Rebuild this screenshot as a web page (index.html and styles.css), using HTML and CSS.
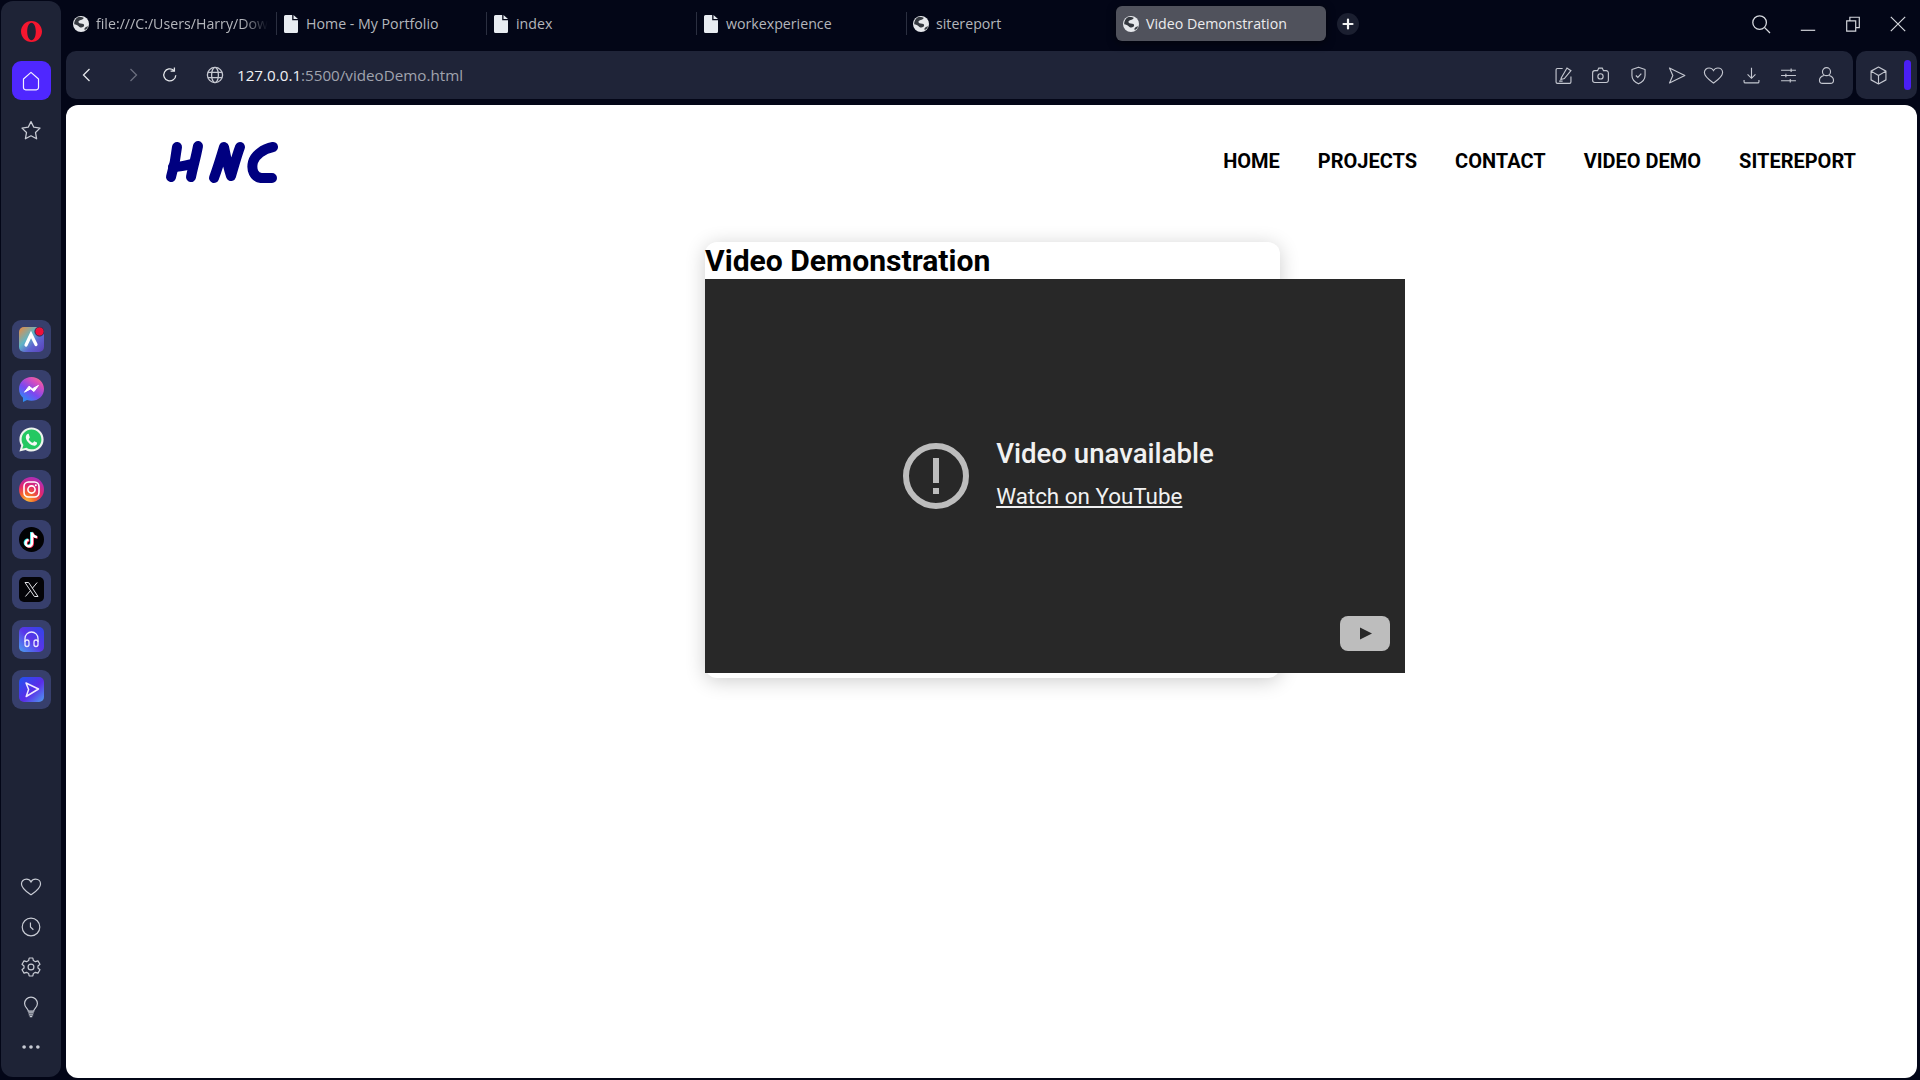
FILE: index.html
```html
<!DOCTYPE html>
<html lang="en">
<head>
<meta charset="utf-8">
<title>Video Demonstration</title>
<link rel="stylesheet" href="styles.css">
</head>
<body>
<svg class="defs" width="0" height="0" aria-hidden="true">
  <defs>
    <symbol id="i-globe" viewBox="0 0 16 16">
      <circle cx="8" cy="8" r="8" fill="#e6e8ec"/>
      <path d="M4.8 1.2C7 .6 9.6 1 10.6 1.8 10.6 3.2 9 3.6 7.6 4 6 4.5 5 5.4 5.6 6.4 6.4 7.6 9 7.2 10.4 8 11.6 8.8 11.2 10.4 10 11 8.6 11.8 6.6 11.4 5.6 10.2 4.6 9 3 8.6 1.2 8.2 1 5.4 2.4 2.6 4.8 1.2ZM11.6 13.4C11 12.6 12 11.8 13 11 13.8 10.4 14.6 10.2 15.2 10.2 14.6 12 13.2 13.6 11.6 14.2Z" fill="#34383f"/>
    </symbol>
    <symbol id="i-file" viewBox="0 0 14 18">
      <path d="M1.5 0H8.2V5.2H14V16.5A1.5 1.5 0 0 1 12.5 18H1.5A1.5 1.5 0 0 1 0 16.5V1.5A1.5 1.5 0 0 1 1.5 0ZM9.5 0 14 4H9.5Z" fill="#e8ecf1"/>
    </symbol>
    <symbol id="i-heart" viewBox="0 0 24 24">
      <path d="M12 20.5C8 17.6 1.6 13.6 1.6 8.6 1.6 5.6 4 3.4 7 3.4 9 3.4 11 4.5 12 6.4 13 4.5 15 3.4 17 3.4 20 3.4 22.4 5.6 22.4 8.6 22.4 13.6 16 17.6 12 20.5Z"/>
    </symbol>
  </defs>
</svg>

<aside class="sidebar">
  <svg class="opera" viewBox="0 0 21 21" aria-hidden="true"><path fill-rule="evenodd" d="M10.5 0C16.3 0 21 4.7 21 10.5S16.3 21 10.5 21 0 16.3 0 10.5 4.7 0 10.5 0ZM10.5 1.8C8 1.8 6.2 5.6 6.2 10.5S8 19.2 10.5 19.2 14.8 15.4 14.8 10.5 13 1.8 10.5 1.8Z" fill="#f5162f"/></svg>
  <div class="home-tile">
    <svg class="side-icon" viewBox="0 0 24 24"><path d="M12 2.6 3.8 9.8V19.2A2.4 2.4 0 0 0 6.2 21.6H17.8A2.4 2.4 0 0 0 20.2 19.2V9.8Z" stroke-linejoin="round"/></svg>
  </div>
  <svg class="side-icon star" viewBox="0 0 24 24"><path d="M12 2.6 14.8 8.2 21 9.1 16.5 13.5 17.6 19.8 12 16.8 6.4 19.8 7.5 13.5 3 9.1 9.2 8.2Z" stroke-linejoin="round"/></svg>

  <div class="apps">
    <div class="app-tile">
      <svg class="app" viewBox="0 0 25 25">
        <defs><linearGradient id="g-aria" x1="0" y1="0" x2="1" y2="1"><stop offset="0" stop-color="#f0883c"/><stop offset=".4" stop-color="#5fb5c6"/><stop offset=".65" stop-color="#5e63d0"/><stop offset="1" stop-color="#5a3fb8"/></linearGradient></defs>
        <rect width="25" height="25" rx="5" fill="url(#g-aria)"/>
        <path d="M7 18 12 7.5 17 17.5" fill="none" stroke="#fff" stroke-width="3.2" stroke-linecap="round"/>
        <circle cx="20.5" cy="4.5" r="4.6" fill="#f0103a" stroke="#2b2d50" stroke-width="1"/>
      </svg>
    </div>
    <div class="app-tile">
      <svg class="app" viewBox="0 0 25 25">
        <defs><linearGradient id="g-msg" x1=".1" y1="1" x2=".8" y2="0"><stop offset="0" stop-color="#1b9cf5"/><stop offset=".45" stop-color="#7a48f0"/><stop offset=".8" stop-color="#d94dbd"/><stop offset="1" stop-color="#f0708a"/></linearGradient></defs>
        <path d="M12.5 0C5.6 0 0 5.2 0 12 0 15.6 1.5 18.7 4 20.8V25L8 22.9C9.4 23.4 10.9 23.7 12.5 23.7 19.4 23.7 25 18.6 25 11.9S19.4 0 12.5 0Z" fill="url(#g-msg)"/>
        <path d="M5.5 15.2 10 9.2 13.4 11.8 19.5 8.4 15 14.5 11.6 11.9Z" fill="#fff" stroke="#fff" stroke-linejoin="round"/>
      </svg>
    </div>
    <div class="app-tile">
      <svg class="app" viewBox="0 0 25 25">
        <path d="M.4 24.6 2.2 18.4C1 16.5.4 14.4.4 12.4.4 5.7 5.8.4 12.5.4S24.6 5.7 24.6 12.4 19.2 24.4 12.5 24.4C10.4 24.4 8.4 23.9 6.7 22.9Z" fill="#eef3ee"/>
        <path d="M3.3 21.8 4.4 18C3.3 16.3 2.6 14.4 2.6 12.4 2.6 6.9 7 2.5 12.5 2.5S22.4 6.9 22.4 12.4 18 22.3 12.5 22.3C10.7 22.3 9 21.8 7.4 20.8Z" fill="#24c862"/>
        <path d="M9.3 6.8C8.8 6.8 8.2 7 7.8 7.5 7.3 8.1 6.8 9 6.8 10.3 6.8 12.3 8.2 14.2 8.5 14.6 9.8 16.4 11.7 18 14.2 18.6 16 19 17.4 18 17.9 16.9 18.1 16.3 18.1 15.7 18 15.6L15.7 14.4C15.4 14.3 15.1 14.4 15 14.6L14.2 15.6C14 15.8 13.8 15.8 13.5 15.7 11.7 15 10.4 13.6 9.8 12.4 9.6 12.1 9.8 11.9 10 11.7L10.7 10.7C10.8 10.5 10.8 10.3 10.7 10L9.8 7.2C9.7 6.9 9.5 6.8 9.3 6.8Z" fill="#f5f8f5"/>
      </svg>
    </div>
    <div class="app-tile">
      <svg class="app" viewBox="0 0 25 25">
        <defs><radialGradient id="g-ig" cx=".3" cy="1" r="1.1"><stop offset="0" stop-color="#fdc13a"/><stop offset=".3" stop-color="#f56a2b"/><stop offset=".6" stop-color="#e0276e"/><stop offset="1" stop-color="#a52fc8"/></radialGradient></defs>
        <circle cx="12.5" cy="12.5" r="12.5" fill="url(#g-ig)"/>
        <rect x="5" y="5" width="15" height="15" rx="4.5" fill="none" stroke="#fff" stroke-width="1.6"/>
        <circle cx="12.5" cy="12.5" r="3.6" fill="none" stroke="#fff" stroke-width="1.6"/>
        <circle cx="16.8" cy="8.2" r="1" fill="#fff"/>
      </svg>
    </div>
    <div class="app-tile">
      <svg class="app" viewBox="0 0 25 25">
        <circle cx="12.5" cy="12.5" r="12.5" fill="#020204"/>
        <g fill="none" stroke-width="2.4">
          <path d="M12.2 5V15.6A3.2 3.2 0 1 1 8.8 12.4M12.2 5C12.6 7.6 14.2 9.2 17.2 9.6" stroke="#25e4e8"/>
          <path d="M13.8 6V16.6A3.2 3.2 0 1 1 10.4 13.4M13.8 6C14.2 8.6 15.8 10.2 18.8 10.6" stroke="#fb2c55"/>
          <path d="M13 5.5V16.1A3.2 3.2 0 1 1 9.6 12.9M13 5.5C13.4 8.1 15 9.7 18 10.1" stroke="#fff"/>
        </g>
      </svg>
    </div>
    <div class="app-tile">
      <svg class="app" viewBox="0 0 25 25">
        <rect width="25" height="25" rx="5" fill="#040408"/>
        <path d="M6 5.5H9.6L19 19.5H15.4ZM18.2 5.5 13.4 11.2M11.5 13.6 6.4 19.5" fill="none" stroke="#e4e4e8" stroke-width="1"/>
      </svg>
    </div>
    <div class="app-tile">
      <svg class="app" viewBox="0 0 25 25">
        <defs><linearGradient id="g-mus" x1="0" y1="1" x2="1" y2="0"><stop offset="0" stop-color="#4aa2f2"/><stop offset=".5" stop-color="#5a35e8"/><stop offset="1" stop-color="#2f46e8"/></linearGradient></defs>
        <rect width="25" height="25" rx="5" fill="url(#g-mus)"/>
        <path d="M6 15V11.5A6.5 6.5 0 0 1 19 11.5V15" fill="none" stroke="#eceaff" stroke-width="1.3"/>
        <rect x="6" y="13" width="4" height="6.5" rx="2" fill="none" stroke="#eceaff" stroke-width="1.3"/>
        <rect x="15" y="13" width="4" height="6.5" rx="2" fill="none" stroke="#eceaff" stroke-width="1.3"/>
      </svg>
    </div>
    <div class="app-tile">
      <svg class="app" viewBox="0 0 25 25">
        <defs><linearGradient id="g-play" x1="0" y1="0" x2="1" y2="1"><stop offset="0" stop-color="#1f55f0"/><stop offset=".55" stop-color="#5a2ce8"/><stop offset="1" stop-color="#4f9ef0"/></linearGradient></defs>
        <rect width="25" height="25" rx="5" fill="url(#g-play)"/>
        <path d="M7 6 19.5 12 7.2 19.5 9.6 12.6Z" fill="none" stroke="#f0eaff" stroke-width="1.5" stroke-linejoin="round"/>
      </svg>
    </div>
  </div>

  <div class="side-bottom">
    <svg class="side-icon"><use href="#i-heart"/></svg>
    <svg class="side-icon" viewBox="0 0 24 24"><circle cx="12" cy="12" r="9.6"/><path d="M11.4 7V12L14.6 15"/></svg>
    <svg class="side-icon" viewBox="0 0 24 24"><circle cx="12" cy="12" r="3.2"/><path d="M10 2.2H14L14.6 5 16.8 6.2 19.6 5.3 21.8 9 19.6 10.9V13.1L21.8 15 19.6 18.7 16.8 17.8 14.6 19 14 21.8H10L9.4 19 7.2 17.8 4.4 18.7 2.2 15 4.4 13.1V10.9L2.2 9 4.4 5.3 7.2 6.2 9.4 5Z" stroke-linejoin="round"/></svg>
    <svg class="side-icon" viewBox="0 0 24 24"><path d="M9 16.4C9 14 5 12.6 5 8.2A7 7 0 0 1 19 8.2C19 12.6 15 14 15 16.4ZM9 18.5H15M9.6 20.5H14.4M10.6 22.4H13.4"/></svg>
    <svg class="side-icon dots" viewBox="0 0 24 24"><circle cx="4.5" cy="12" r="2"/><circle cx="12" cy="12" r="2"/><circle cx="19.5" cy="12" r="2"/></svg>
  </div>
</aside>

<div class="main">
  <div class="tabstrip">
    <div class="tab"><svg class="fav"><use href="#i-globe"/></svg><span class="tab-label fade">file:///C:/Users/Harry/Dow</span></div>
    <div class="tab sep"><svg class="fav-file"><use href="#i-file"/></svg><span class="tab-label">Home - My Portfolio</span></div>
    <div class="tab sep"><svg class="fav-file"><use href="#i-file"/></svg><span class="tab-label">index</span></div>
    <div class="tab sep"><svg class="fav-file"><use href="#i-file"/></svg><span class="tab-label">workexperience</span></div>
    <div class="tab sep"><svg class="fav"><use href="#i-globe"/></svg><span class="tab-label">sitereport</span></div>
    <div class="tab active"><svg class="fav"><use href="#i-globe"/></svg><span class="tab-label">Video Demonstration</span></div>
    <div class="newtab"><svg viewBox="0 0 12 12" width="12" height="12"><path d="M6 1.5V10.5M1.5 6H10.5" stroke="#f2f2f2" stroke-width="2.2" stroke-linecap="round"/></svg></div>
    <div class="winctl">
      <span><svg class="win search" viewBox="0 0 20 20"><circle cx="8.6" cy="8.6" r="6.8"/><path d="M13.4 13.4 19 19"/></svg></span>
      <span><svg class="win" viewBox="0 0 20 20"><path d="M2 17H18"/></svg></span>
      <span><svg class="win" viewBox="0 0 20 20"><path d="M3 6.5H13V18H3ZM6.5 6.5V2.5H17V14H13"/></svg></span>
      <span><svg class="win" viewBox="0 0 20 20"><path d="M2 2 18 18M18 2 2 18"/></svg></span>
    </div>
  </div>

  <div class="toolbar">
    <div class="addressbar">
      <svg class="tb back" viewBox="0 0 20 20"><path d="M12.5 4 6.5 10 12.5 16"/></svg>
      <svg class="tb forward" viewBox="0 0 20 20"><path d="M7.5 4 13.5 10 7.5 16"/></svg>
      <svg class="tb reload" viewBox="0 0 20 20"><path d="M15.8 10.2A6 6 0 1 1 13.8 5.4M14.4 2.4V6.2H10.6"/></svg>
      <svg class="tb globe" viewBox="0 0 20 20"><circle cx="10" cy="10" r="7.6"/><ellipse cx="10" cy="10" rx="3.4" ry="7.6"/><path d="M3 7.4H17M3 12.6H17"/></svg>
      <span class="url"><span class="url-host">127.0.0.1</span>:5500/videoDemo.html</span>
      <div class="tb-right">
        <svg class="tb" viewBox="0 0 24 24"><path d="M11 4H5A1.5 1.5 0 0 0 3.5 5.5V19.5A1.5 1.5 0 0 0 5 21H19A1.5 1.5 0 0 0 20.5 19.5V13M9.5 14.5 16 3.5 20.5 6.5 13 15.5 9 16.5ZM7 18.5H11"/></svg>
        <svg class="tb" viewBox="0 0 24 24"><path d="M8.6 6.5 10 3.5H14L15.4 6.5H18.5A2.5 2.5 0 0 1 21 9V17.5A2.5 2.5 0 0 1 18.5 20H5.5A2.5 2.5 0 0 1 3 17.5V9A2.5 2.5 0 0 1 5.5 6.5Z"/><circle cx="12" cy="13" r="3"/></svg>
        <svg class="tb" viewBox="0 0 24 24"><path d="M12 2.5 19.5 5.2V12C19.5 16.4 15.8 19.8 12 21.5 8.2 19.8 4.5 16.4 4.5 12V5.2Z" stroke-linejoin="round"/><path d="M9 12 11.2 14.2 15.2 9.8"/></svg>
        <svg class="tb" viewBox="0 0 24 24"><path d="M4 3.5 21.5 12 4 20.5 7.8 12Z" stroke-linejoin="round"/></svg>
        <svg class="tb"><use href="#i-heart"/></svg>
        <svg class="tb" viewBox="0 0 24 24"><path d="M12 3V15M7.5 10.8 12 15.2 16.5 10.8M3.5 17V19A1.5 1.5 0 0 0 5 20.5H19A1.5 1.5 0 0 0 20.5 19V17"/></svg>
        <svg class="tb" viewBox="0 0 24 24"><path d="M3.5 6H20.5M3.5 12H20.5M3.5 18H20.5M15 4V8M9 10V14M14 16V20"/></svg>
        <svg class="tb" viewBox="0 0 24 24"><circle cx="12" cy="7.6" r="4.6"/><path d="M9 12C5.6 13 4 15 4 17.4 4 19.6 5.6 21 7.5 21H16.5C18.4 21 20 19.6 20 17.4 20 15 18.4 13 15 12"/></svg>
      </div>
    </div>
    <div class="extbox">
      <svg class="tb" viewBox="0 0 24 24"><path d="M12 2.4 20.5 7V17L12 21.6 3.5 17V7ZM3.5 7 12 12 20.5 7M12 12V21.6" stroke-linejoin="round"/></svg>
      <div class="extbar"></div>
    </div>
  </div>

  <main class="page">
    <header class="site-header">
      <svg class="logo" viewBox="0 0 135 55" role="img" aria-label="HNC logo">
        <g fill="none" stroke="#000080" stroke-width="10" stroke-linecap="round" stroke-linejoin="round">
          <path d="M22 12C21 22 19 32 16 42"/>
          <path d="M43 11C41 22 38 32 36 42"/>
          <path d="M18 32C25 32 31 30 38 29"/>
          <path d="M59 43C63 32 66 22 69 12 71 22 73 32 76 41 79 31 82 20 85 12"/>
          <path d="M118 12C108 14 100 20 98 27 96 35 99 42 106 43L117 43"/>
        </g>
      </svg>
      <nav class="site-nav">
        <a>HOME</a><a>PROJECTS</a><a>CONTACT</a><a>VIDEO DEMO</a><a>SITEREPORT</a>
      </nav>
    </header>
    <section class="card">
      <h1>Video Demonstration</h1>
      <div class="video">
        <div class="err">
          <svg class="err-icon" viewBox="0 0 66 66"><circle cx="33" cy="33" r="30" fill="none" stroke="#bdbdbd" stroke-width="6"/><rect x="30" y="15" width="6" height="25" fill="#bdbdbd"/><rect x="30" y="45" width="6" height="6" fill="#bdbdbd"/></svg>
          <div class="err-text">
            <div class="err-title">Video unavailable</div>
            <a class="err-link">Watch on YouTube</a>
          </div>
        </div>
        <svg class="yt" viewBox="0 0 50 35"><rect width="50" height="35" rx="8" fill="#bdbdbd"/><path d="M20 11.5 32 17.5 20 23.5Z" fill="#282828"/></svg>
      </div>
    </section>
  </main>
</div>
</body>
</html>
```
FILE: styles.css
```css
* { box-sizing: border-box; }
html, body { margin: 0; height: 100%; }
body {
  width: 1920px;
  height: 1080px;
  overflow: hidden;
  display: flex;
  background: #030617;
  font-family: "Open Sans", "Liberation Sans", sans-serif;
}
.defs { position: absolute; }

/* Sidebar */
.sidebar {
  width: 60px;
  margin: 1px 5px 3px 1px;
  padding: 20px 0 19px;
  background: #1e2336;
  border-radius: 12px;
  display: flex;
  flex-direction: column;
  align-items: center;
  flex-shrink: 0;
}
.opera { width: 21px; height: 21px; display: block; }
.home-tile {
  width: 39px;
  height: 39px;
  margin-top: 19px;
  border-radius: 9px;
  background: #4f27ff;
  display: flex;
  align-items: center;
  justify-content: center;
}
.home-tile .side-icon { stroke: #f3f1ff; }
.side-icon {
  width: 22px;
  height: 22px;
  display: block;
  fill: none;
  stroke: #c8cbd4;
  stroke-width: 1.3;
  flex-shrink: 0;
}
.star { margin-top: 19px; width: 24px; height: 24px; }
.apps {
  margin-top: 177px;
  display: flex;
  flex-direction: column;
  gap: 11px;
}
.app-tile {
  width: 39px;
  height: 39px;
  border-radius: 9px;
  background: #373f6c;
  display: flex;
  align-items: center;
  justify-content: center;
}
.app { width: 25px; height: 25px; display: block; }
.side-bottom {
  margin-top: auto;
  display: flex;
  flex-direction: column;
  gap: 18px;
}
.dots { fill: #c8cbd4; stroke: none; }

/* Main column */
.main {
  flex: 1;
  min-width: 0;
  display: flex;
  flex-direction: column;
}
.tabstrip {
  height: 51px;
  padding-top: 6px;
  display: flex;
  align-items: flex-start;
  flex-shrink: 0;
}
.tab {
  width: 210px;
  height: 35px;
  padding-left: 7px;
  display: flex;
  align-items: center;
  gap: 7px;
  position: relative;
  flex-shrink: 0;
  border-radius: 6px;
}
.tab.sep::before {
  content: "";
  position: absolute;
  left: 0;
  top: 6px;
  bottom: 6px;
  width: 1px;
  background: #2b2f40;
}
.tab.active {
  background: #50525c;
  box-shadow: 0 2px 8px rgba(0, 0, 0, .5);
}
.tab.active .tab-label { color: #ececee; }
.fav { width: 16px; height: 16px; flex-shrink: 0; }
.fav-file { width: 14px; height: 18px; margin: 0 1px; flex-shrink: 0; }
.tab-label {
  font-size: 14.2px;
  color: #b4b6bc;
  white-space: nowrap;
}
.tab-label.fade {
  -webkit-mask-image: linear-gradient(to right, #000 85%, transparent);
  mask-image: linear-gradient(to right, #000 85%, transparent);
}
.newtab {
  width: 22px;
  height: 22px;
  margin: 7px 0 0 11px;
  border-radius: 50%;
  background: #1b1f30;
  display: flex;
  align-items: center;
  justify-content: center;
}
.winctl {
  margin-left: auto;
  display: flex;
}
.winctl span {
  width: 45px;
  height: 35px;
  display: flex;
  align-items: center;
  justify-content: center;
}
.win {
  width: 18px;
  height: 18px;
  fill: none;
  stroke: #d6d8de;
  stroke-width: 1.3;
}
.win.search {
  width: 20px;
  height: 20px;
  margin-right: 3px;
}

/* Toolbar */
.toolbar {
  height: 48px;
  margin-right: 3px;
  display: flex;
  gap: 3px;
  flex-shrink: 0;
}
.addressbar {
  flex: 1;
  background: #1f2438;
  border-radius: 10px;
  padding: 0 16px 0 11px;
  display: flex;
  align-items: center;
}
.extbox {
  width: 61px;
  background: #1f2438;
  border-radius: 10px;
  display: flex;
  align-items: center;
  padding: 0 6px 0 12px;
  justify-content: space-between;
}
.extbar {
  width: 7px;
  height: 30px;
  border-radius: 4px;
  background: #4a1ff5;
}
.tb {
  width: 21px;
  height: 21px;
  display: block;
  flex-shrink: 0;
  fill: none;
  stroke: #c4c7d0;
  stroke-width: 1.3;
}
.back { stroke: #e4e6ea; width: 20px; height: 20px; }
.forward { margin-left: 26px; stroke: #6a6e7e; width: 20px; height: 20px; }
.reload { margin-left: 17px; stroke: #e4e6ea; width: 20px; height: 20px; }
.globe { margin-left: 25px; width: 20px; height: 20px; }
.url {
  margin-left: 12px;
  font-size: 15.2px;
  color: #a0a3ae;
  white-space: nowrap;
}
.url-host { color: #f0f1f4; }
.tb-right {
  margin-left: auto;
  display: flex;
  gap: 16.6px;
}

/* Page */
.page {
  flex: 1;
  margin: 6px 3px 2px 0;
  background: #fff;
  border-radius: 12px;
  color: #000;
  font-family: Roboto, "Liberation Sans", sans-serif;
  overflow: hidden;
}
.site-header {
  height: 115px;
  padding: 0 61px 0 89px;
  display: flex;
  align-items: center;
  justify-content: space-between;
}
.logo { width: 135px; height: 55px; display: block; }
.site-nav {
  display: flex;
  gap: 38px;
  font-size: 20px;
  font-weight: 700;
  margin-top: -3px;
}
.card {
  width: 575px;
  margin: 22px 0 0 639px;
  padding-bottom: 5px;
  background: #fff;
  border-radius: 12px;
  box-shadow: 0 3px 20px rgba(0, 0, 0, .2);
}
.card h1 {
  margin: 0;
  font-size: 30.1px;
  line-height: 37px;
  font-weight: 700;
}
.video {
  position: relative;
  width: 700px;
  height: 394px;
  background: #282828;
  display: flex;
  align-items: center;
  justify-content: center;
}
.err {
  display: flex;
  align-items: center;
  gap: 27px;
  color: #f1f1f1;
  margin-left: 7px;
}
.err-icon { width: 66px; height: 66px; display: block; }
.err-text { margin-bottom: 7px; }
.err-title {
  font-size: 27.6px;
  line-height: 34px;
  font-weight: 500;
}
.err-link {
  display: block;
  margin-top: 12px;
  font-size: 22.4px;
  line-height: 26px;
  text-decoration: underline;
}
.yt {
  position: absolute;
  right: 15px;
  bottom: 22px;
  width: 50px;
  height: 35px;
}
```
